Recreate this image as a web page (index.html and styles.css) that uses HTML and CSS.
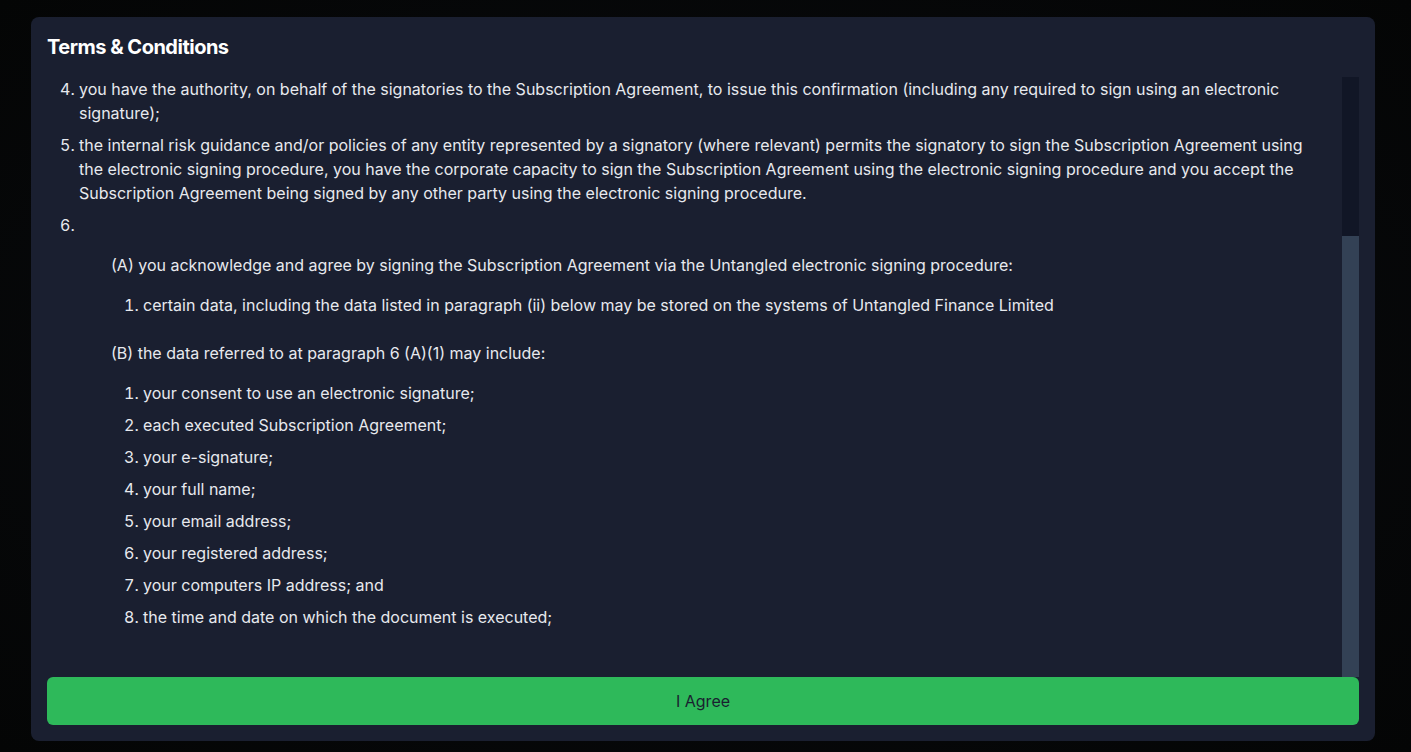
FILE: index.html
```html
<!DOCTYPE html>
<html lang="en">
<head>
<meta charset="utf-8">
<title>Terms &amp; Conditions</title>
<link rel="stylesheet" href="styles.css">
</head>
<body>
<div class="page">
  <div class="modal">
    <h2 class="modal-title">Terms &amp; Conditions</h2>
    <div class="scroll-area">
      <div class="content">
        <ol class="terms" start="4">
          <li>you have the authority, on behalf of the signatories to the Subscription Agreement, to issue this confirmation (including any required to sign using an electronic signature);</li>
          <li>the internal risk guidance and/or policies of any entity represented by a signatory (where relevant) permits the signatory to sign the Subscription Agreement using the electronic signing procedure, you have the corporate capacity to sign the Subscription Agreement using the electronic signing procedure and you accept the Subscription Agreement being signed by any other party using the electronic signing procedure.</li>
          <li>&nbsp;
            <p class="sub">(A) you acknowledge and agree by signing the Subscription Agreement via the Untangled electronic signing procedure:</p>
            <ol class="nested">
              <li>certain data, including the data listed in paragraph (ii) below may be stored on the systems of Untangled Finance Limited</li>
            </ol>
            <p class="sub">(B) the data referred to at paragraph 6 (A)(1) may include:</p>
            <ol class="nested">
              <li>your consent to use an electronic signature;</li>
              <li>each executed Subscription Agreement;</li>
              <li>your e-signature;</li>
              <li>your full name;</li>
              <li>your email address;</li>
              <li>your registered address;</li>
              <li>your computers IP address; and</li>
              <li>the time and date on which the document is executed;</li>
            </ol>
          </li>
        </ol>
      </div>
      <div class="scrollbar"><div class="thumb"></div></div>
    </div>
    <button class="agree" type="button">I Agree</button>
  </div>
</div>
</body>
</html>
```

FILE: styles.css
```css
* { box-sizing: border-box; }
html, body {
  margin: 0;
  padding: 0;
  background: #050607;
  font-family: Inter, "Noto Sans", sans-serif;
}
.page {
  width: 1411px;
  height: 752px;
  padding: 17px 0 0 31px;
  background: radial-gradient(ellipse at center, #0a0c10 0%, #040505 100%);
}
.modal {
  width: 1344px;
  height: 724px;
  background: #1a1f30;
  border-radius: 8px;
  padding: 16px;
  display: flex;
  flex-direction: column;
}
.modal-title {
  margin: 0 0 16px 0;
  font-size: 20px;
  line-height: 28px;
  font-weight: 700;
  color: #ffffff;
  letter-spacing: -0.5px;
}
.scroll-area {
  display: flex;
  height: 600px;
  overflow: hidden;
}
.content {
  flex: 1;
  color: #e7e9ee;
  font-size: 16px;
  line-height: 24px;
  padding-right: 16px;
}
.terms {
  margin: 0;
  padding-left: 32px;
}
.terms > li { margin-bottom: 8px; }
.sub {
  margin: 16px 0;
  padding-left: 32px;
}
.nested {
  margin: 16px 0 24px 0;
  padding-left: 64px;
}
.nested li { margin-bottom: 8px; }
.nested:last-child { margin-bottom: 0; }
.scrollbar {
  width: 17px;
  flex: none;
  background: #111626;
  display: flex;
  flex-direction: column;
  justify-content: flex-end;
}
.thumb {
  height: 441px;
  background: #334155;
}
.agree {
  height: 48px;
  width: 100%;
  border: none;
  border-radius: 6px;
  background: #2eb95a;
  color: #1a1f30;
  font-family: Inter, "Noto Sans", sans-serif;
  font-size: 16px;
  line-height: 24px;
  cursor: pointer;
}
```
